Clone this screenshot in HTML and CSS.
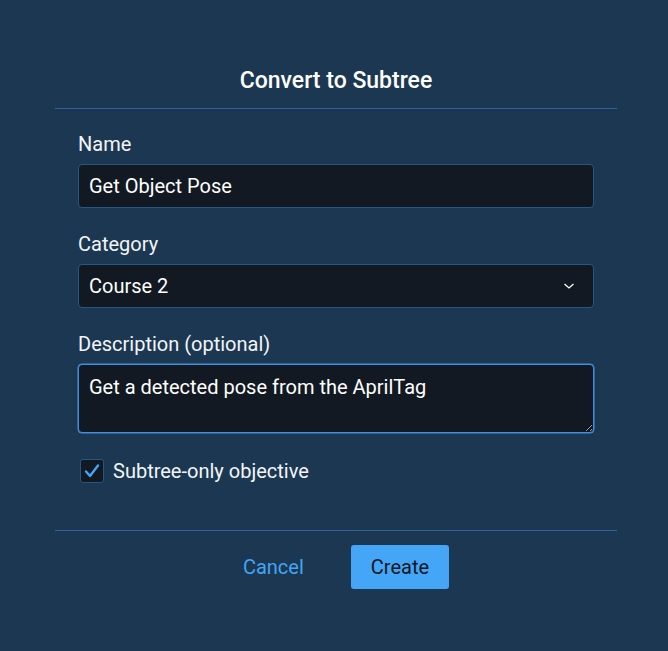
FILE: index.html
```html
<!DOCTYPE html>
<html lang="en">
<head>
<meta charset="utf-8">
<title>Convert to Subtree</title>
<link rel="stylesheet" href="styles.css">
</head>
<body>
<div class="dialog">
  <h2 class="title">Convert to Subtree</h2>
  <div class="divider"></div>
  <form class="form">
    <div class="field">
      <label class="label">Name</label>
      <div class="input">Get Object Pose</div>
    </div>
    <div class="field">
      <label class="label">Category</label>
      <div class="input select">
        <span>Course 2</span>
        <svg class="chevron" width="12" height="8" viewBox="0 0 12 8"><path d="M1.5 2 L6 6 L10.5 2" fill="none" stroke="#ffffff" stroke-width="1.3"/></svg>
      </div>
    </div>
    <div class="field">
      <label class="label">Description (optional)</label>
      <textarea class="input area">Get a detected pose from the AprilTag</textarea>
    </div>
    <div class="check-row">
      <span class="checkbox">
        <svg width="18" height="18" viewBox="0 0 18 18"><path d="M3 9.5 L7 14 L15 3.5" fill="none" stroke="#42a5f5" stroke-width="2.4" stroke-linecap="round" stroke-linejoin="round"/></svg>
      </span>
      <span class="check-label">Subtree-only objective</span>
    </div>
  </form>
  <div class="divider bottom"></div>
  <div class="actions">
    <button class="btn cancel" type="button">Cancel</button>
    <button class="btn create" type="button">Create</button>
  </div>
</div>
</body>
</html>
```

FILE: styles.css
```css
html, body {
  margin: 0;
  padding: 0;
}
body {
  background: #1c3752;
  font-family: Roboto, "Liberation Sans", Arial, sans-serif;
  color: #ffffff;
  width: 668px;
  height: 651px;
  overflow: hidden;
}
.dialog {
  padding: 67px 51px 0 55px;
}
.title {
  margin: 0;
  font-size: 23px;
  line-height: 28px;
  font-weight: 500;
  text-align: center;
  color: #ffffff;
}
.divider {
  height: 1px;
  background: #2d639a;
  margin-top: 13px;
}
.divider.bottom {
  margin-top: 47px;
}
.form {
  padding: 23px 23px 0 23px;
  display: flex;
  flex-direction: column;
  gap: 24px;
}
.field {
  display: flex;
  flex-direction: column;
  gap: 8px;
}
.label {
  font-size: 20px;
  line-height: 24px;
  color: #f2f5f8;
}
.input {
  box-sizing: border-box;
  height: 44px;
  background: #121922;
  border: 1px solid #285682;
  border-radius: 4px;
  padding: 0 10px;
  font-family: inherit;
  font-size: 20px;
  line-height: 42px;
  color: #ffffff;
}
.select {
  display: flex;
  align-items: center;
  justify-content: space-between;
  padding-right: 18px;
}
.chevron {
  display: block;
}
.area {
  display: block;
  width: 100%;
  height: 69px;
  line-height: 24px;
  padding: 10px 10px;
  border: 1px solid #3f90e0;
  box-shadow: 0 0 0 0.5px #3f90e0;
  outline: none;
  resize: vertical;
  margin: 0;
  color-scheme: dark;
}
.check-row {
  display: flex;
  align-items: center;
  gap: 9px;
  margin-top: 2px;
  padding-left: 2px;
}
.checkbox {
  box-sizing: border-box;
  width: 24px;
  height: 24px;
  border: 1px solid #285682;
  border-radius: 3px;
  background: #121922;
  display: flex;
  align-items: center;
  justify-content: center;
}
.checkbox svg {
  display: block;
}
.check-label {
  font-size: 20px;
  line-height: 24px;
  color: #f2f5f8;
}
.actions {
  display: flex;
  justify-content: center;
  gap: 27px;
  padding-top: 14px;
}
.btn {
  font-family: inherit;
  font-size: 20px;
  height: 44px;
  padding: 0 20px;
  border: none;
  border-radius: 3px;
  cursor: pointer;
}
.cancel {
  background: transparent;
  color: #42a5f5;
}
.create {
  background: #45a6f7;
  color: #0e1620;
}
```
